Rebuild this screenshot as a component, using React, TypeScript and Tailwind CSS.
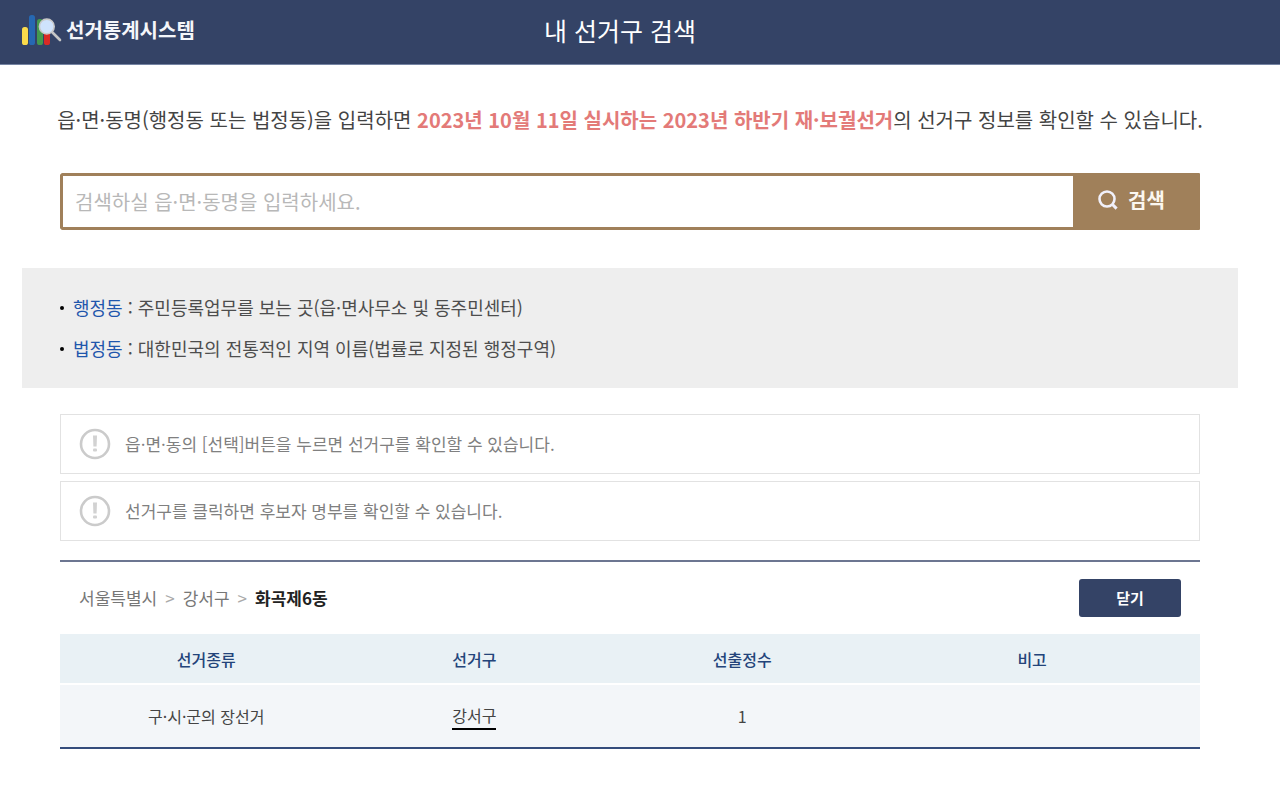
import { useState } from 'react';

const districtTerms = [
  { term: '행정동', text: '주민등록업무를 보는 곳(읍·면사무소 및 동주민센터)' },
  { term: '법정동', text: '대한민국의 전통적인 지역 이름(법률로 지정된 행정구역)' },
];

const notices = [
  '읍·면·동의 [선택]버튼을 누르면 선거구를 확인할 수 있습니다.',
  '선거구를 클릭하면 후보자 명부를 확인할 수 있습니다.',
];

function LogoMark() {
  return (
    <svg width="40" height="32" viewBox="0 0 40 32" aria-hidden="true">
      <rect x="0" y="13" width="6" height="18" rx="2.6" fill="#fadb4b" />
      <rect x="7" y="1" width="6" height="30" rx="2.6" fill="#2668b2" />
      <rect x="15" y="5" width="6" height="26" rx="2.6" fill="#439a4e" />
      <rect x="22" y="18" width="6" height="13" rx="2.6" fill="#d92b25" />
      <path d="M30.5 18.5 38 26" stroke="#c6c6c6" strokeWidth="2.6" strokeLinecap="round" />
      <circle cx="24.8" cy="12.5" r="7.4" fill="#cfe3fc" stroke="#c9c9c9" strokeWidth="1.6" />
    </svg>
  );
}

function SearchIcon() {
  return (
    <svg width="20" height="20" viewBox="0 0 20 20" fill="none" stroke="#f1f0fa" strokeWidth="2.6" aria-hidden="true">
      <circle cx="9" cy="9" r="7.5" />
      <path d="m14 14 4.6 4.6" strokeWidth="3" />
    </svg>
  );
}

function NoticeIcon() {
  return (
    <svg className="shrink-0" width="32" height="32" viewBox="0 0 32 32" fill="none" aria-hidden="true">
      <circle cx="16" cy="16" r="14" stroke="#cbcbcb" strokeWidth="2.6" />
      <path d="M14 7.5h4l-.4 11h-3.2z" fill="#d2d2d2" />
      <rect x="14" y="20.5" width="4" height="3" rx="1" fill="#d2d2d2" />
    </svg>
  );
}

export default function App() {
  const [query, setQuery] = useState('');
  const [open, setOpen] = useState(true);

  return (
    <div lang="ko" className="min-h-screen bg-white font-['Noto_Sans_CJK_KR',sans-serif] text-[#444] [font-feature-settings:'pwid']">
      <header className="grid h-[65px] grid-cols-[1fr_auto_1fr] items-center border-b border-[#7584a3] bg-[#344366] pr-[42px] pl-[22px] text-white">
        <a href="#" className="flex items-center gap-1 pb-1">
          <LogoMark />
          <span className="text-[20px] leading-7 font-bold text-[#f4f6fa]">선거통계시스템</span>
        </a>
        <h1 className="pr-5 pb-1 text-[25px] leading-9">내 선거구 검색</h1>
      </header>

      <main className="pr-[42px] pb-12 pl-[22px]">
        <p className="pt-10 text-center text-[20px] leading-[30px]">
          읍·면·동명(행정동 또는 법정동)을 입력하면{' '}
          <strong className="font-bold text-[#e37a78]">2023년 10월 11일 실시하는 2023년 하반기 재·보궐선거</strong>의 선거구
          정보를 확인할 수 있습니다.
        </p>

        <form
          className="mx-[38px] mt-[38px] flex h-[57px] overflow-hidden rounded-l-[3px] rounded-r-[1px]"
          onSubmit={(event) => event.preventDefault()}
        >
          <input
            type="text"
            aria-label="읍·면·동명"
            value={query}
            onChange={(event) => setQuery(event.target.value)}
            placeholder="검색하실 읍·면·동명을 입력하세요."
            className="min-w-0 flex-1 rounded-l-[3px] border-[3px] border-r-0 border-[#a0805a] px-3 text-[20px] outline-none placeholder:text-[#b8b8b8]"
          />
          <button
            type="submit"
            className="flex w-[127px] items-center justify-center gap-[10px] bg-[#a0805a] pr-3 pb-1 pl-[2px] text-[20px] font-bold text-[#fbf7f0]"
          >
            <SearchIcon />
            검색
          </button>
        </form>

        <ul className="mt-[38px] flex h-[120px] flex-col justify-center gap-3 bg-[#eee] px-[38px] text-[18px] leading-[29px] text-[#4d4d4d]">
          {districtTerms.map(({ term, text }) => (
            <li key={term} className="flex items-center gap-[9px]">
              <span className="size-1 rounded-full bg-black" />
              <span>
                <span className="text-[#1f56ac]">{term}</span> : {text}
              </span>
            </li>
          ))}
        </ul>

        <div className="mx-[38px] mt-[26px] flex flex-col gap-[7px]">
          {notices.map((notice) => (
            <p
              key={notice}
              className="flex h-[60px] items-center gap-[14px] border border-[#e2e2e2] px-[18px] text-[17px] text-[#808080]"
            >
              <NoticeIcon />
              {notice}
            </p>
          ))}
        </div>

        {open && (
          <section className="mx-[38px] mt-[19px] border-t-2 border-[#6c7691]">
            <div className="flex h-[72px] items-center justify-between px-[19px]">
              <nav aria-label="선택한 지역" className="flex items-center gap-2 text-[17px] text-[#777]">
                <span>서울특별시</span>
                <span className="text-[#aaa]">&gt;</span>
                <span>강서구</span>
                <span className="text-[#aaa]">&gt;</span>
                <strong className="font-bold text-[#222]">화곡제6동</strong>
              </nav>
              <button
                type="button"
                onClick={() => setOpen(false)}
                className="h-[38px] w-[102px] rounded-[3px] bg-[#344366] text-[15px] font-bold text-white"
              >
                닫기
              </button>
            </div>
            <table className="w-full table-fixed border-collapse border-b-2 border-[#344c7c] text-center text-[16px]">
              <thead>
                <tr className="h-[50px] bg-[#e9f1f5] text-[#23447a]">
                  <th scope="col" className="w-[24.6%] pl-3 font-medium">선거종류</th>
                  <th scope="col" className="w-[23.5%] font-medium">선거구</th>
                  <th scope="col" className="w-[23.5%] font-medium">선출정수</th>
                  <th scope="col" className="pr-3 font-medium">비고</th>
                </tr>
              </thead>
              <tbody>
                <tr className="h-[64px] border-t-2 border-t-white bg-[#f3f6f9]">
                  <td className="pl-3">구·시·군의 장선거</td>
                  <td>
                    <a href="#" className="inline-block border-b-2 border-black leading-[26px]">강서구</a>
                  </td>
                  <td>1</td>
                  <td className="pr-3" />
                </tr>
              </tbody>
            </table>
          </section>
        )}
      </main>
    </div>
  );
}
